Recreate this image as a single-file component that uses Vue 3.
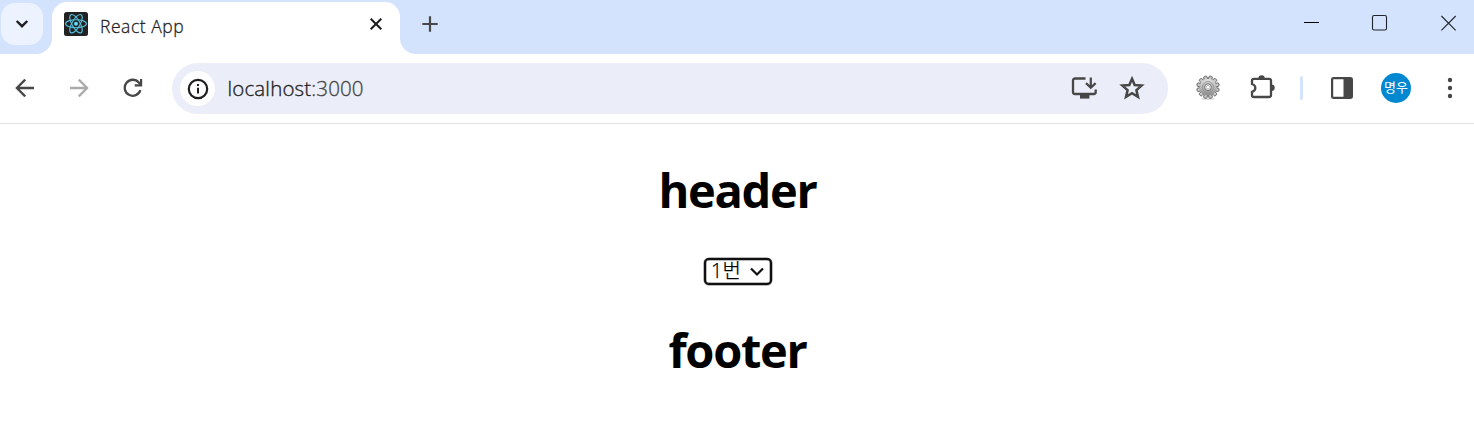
<script setup>
import { ref } from 'vue'

const selected = ref('1번')
const options = ['1번', '2번', '3번']

// Twelve evenly spaced gear teeth
const teeth = Array.from({ length: 12 }, (_, i) => i * 30)
</script>

<template>
  <div class="browser">
    <header class="tabstrip">
      <button class="tab-search" aria-label="Search tabs">
        <svg width="14" height="10" viewBox="0 0 14 10"><path d="M1.7 2 7 7.2 12.3 2" fill="none" stroke="#1f1f1f" stroke-width="2.4" /></svg>
      </button>
      <div class="tab">
        <svg class="favicon" width="24" height="24" viewBox="0 0 24 24">
          <rect width="24" height="24" rx="2.5" fill="#222" />
          <g fill="none" stroke="#53c1de" stroke-width="1.15">
            <ellipse cx="12" cy="11.7" rx="10.4" ry="4" />
            <ellipse cx="12" cy="11.7" rx="10.4" ry="4" transform="rotate(60 12 11.7)" />
            <ellipse cx="12" cy="11.7" rx="10.4" ry="4" transform="rotate(120 12 11.7)" />
          </g>
          <circle cx="12" cy="11.7" r="2" fill="#61dafb" />
        </svg>
        <span class="tab-title">React App</span>
        <svg class="tab-close" width="14" height="14" viewBox="0 0 14 14"><path d="M1.7 1.7 12.3 12.3M12.3 1.7 1.7 12.3" stroke="#1f1f1f" stroke-width="2.1" /></svg>
      </div>
      <svg class="new-tab" width="16" height="16" viewBox="0 0 16 16"><path d="M8 .3V15.7M.3 8H15.7" stroke="#474747" stroke-width="2.2" /></svg>
      <div class="window-controls">
        <svg width="16" height="16" viewBox="0 0 16 16"><path d="M0 7.5H15" stroke="#000" /></svg>
        <svg width="16" height="16" viewBox="0 0 16 16"><rect x=".5" y=".5" width="14" height="14.5" rx="1.6" fill="none" stroke="#20242b" stroke-width="1.1" /></svg>
        <svg width="16" height="16" viewBox="0 0 16 16"><path d="M1.4 1 15.7 15.3M15.7 1 1.4 15.3" stroke="#20242b" stroke-width="1.1" /></svg>
      </div>
    </header>

    <nav class="toolbar">
      <svg class="back" width="20" height="20" viewBox="0 0 20 20"><path d="M10.2 1.6 1.9 10 10.2 18.4M2 10H19" fill="none" stroke="#474747" stroke-width="2.3" /></svg>
      <svg class="forward" width="20" height="20" viewBox="0 0 20 20"><path d="M9.8 1.6 18.1 10 9.8 18.4M18 10H1" fill="none" stroke="#aaa" stroke-width="2.3" /></svg>
      <svg class="reload" width="20" height="20" viewBox="0 0 20 20">
        <path d="M17.4 12.2A8 8 0 1 1 15.8 4.5L18 7" fill="none" stroke="#474747" stroke-width="2.3" />
        <path d="M19.2 1V8.6H11.7V6.3H17V1Z" fill="#474747" />
      </svg>
      <div class="omnibox">
        <span class="site-info">
          <svg width="22" height="22" viewBox="0 0 22 22">
            <circle cx="11" cy="11" r="9.2" fill="none" stroke="#1f1f1f" stroke-width="2.2" />
            <path d="M11 9.7V15.5M11 6V8" stroke="#1f1f1f" stroke-width="2" />
          </svg>
        </span>
        <span class="url">localhost<span class="port">:3000</span></span>
        <svg class="install" width="26" height="24" viewBox="0 0 26 24">
          <path d="M14.5 2.5H4A2 2 0 0 0 2 4.5V16A2 2 0 0 0 4 18H22.7A2 2 0 0 0 24.7 16V13.5" fill="none" stroke="#474747" stroke-width="2.3" />
          <path d="M9 18.5H18.4V22.6H9Z" fill="#474747" />
          <path d="M19.8 1.4V11.2M15 7.1 19.8 11.8 24.6 7.1" fill="none" stroke="#474747" stroke-width="2.2" />
        </svg>
        <svg class="star" width="26" height="26" viewBox="0 0 26 26"><path d="M13 3.8 15.7 10 22.6 10.6 17.4 15.1 19 21.9 13 18.3 7 21.9 8.6 15.1 3.4 10.6 10.3 10Z" fill="none" stroke="#474747" stroke-width="2.5" /></svg>
      </div>
      <svg class="gear" width="24" height="26" viewBox="0 0 24 26">
        <defs>
          <linearGradient id="metal" x1="0" y1="0" x2="0" y2="1"><stop offset="0" stop-color="#e0e0e0" /><stop offset=".5" stop-color="#b8b8b8" /><stop offset="1" stop-color="#8c8c8c" /></linearGradient>
        </defs>
        <ellipse cx="12" cy="24" rx="7" ry="1" fill="#ddd" />
        <rect v-for="a in teeth" :key="a" x="10.3" y=".9" width="3.4" height="5" rx="1.1" fill="#c8c8c8" stroke="#5e5e5e" stroke-width=".9" :transform="`rotate(${a + 15} 12 12.2)`" />
        <circle cx="12" cy="12.2" r="8.5" fill="url(#metal)" />
        <circle cx="12" cy="12.2" r="5.5" fill="none" stroke="#909090" stroke-width=".8" />
        <circle cx="12" cy="12.2" r="3.4" fill="#eee" stroke="#666" stroke-width=".9" />
        <circle cx="12" cy="12.2" r="1.8" fill="#fff" stroke="#999" stroke-width=".6" />
      </svg>
      <svg class="puzzle" width="26" height="26" viewBox="0 0 26 26">
        <path d="M4 4.8H19.2A1.8 1.8 0 0 1 21 6.6V21.2A1.8 1.8 0 0 1 19.2 23H3.8A1.8 1.8 0 0 1 2 21.2V17.8C6.4 16.4 6.4 11.4 2 10V6.6A1.8 1.8 0 0 1 3.8 4.8Z" fill="none" stroke="#474747" stroke-width="2.3" />
        <path d="M8.4 4.5A3.2 3.2 0 0 1 14.8 4.5ZM21.5 10.6A3.2 3.2 0 0 1 21.5 17Z" fill="#474747" />
      </svg>
      <span class="divider"></span>
      <svg class="side-panel" width="22" height="22" viewBox="0 0 22 22">
        <rect x="1.1" y="1.1" width="19.8" height="19.8" rx="1.6" fill="none" stroke="#474747" stroke-width="2.2" />
        <path d="M12.5 1H20.5V21H12.5Z" fill="#474747" />
      </svg>
      <span class="avatar">명우</span>
      <svg class="menu" width="6" height="22" viewBox="0 0 6 22"><g fill="#474747"><circle cx="3" cy="3" r="2.2" /><circle cx="3" cy="11" r="2.2" /><circle cx="3" cy="19" r="2.2" /></g></svg>
    </nav>

    <main class="page">
      <h1>header</h1>
      <div class="picker">
        <select v-model="selected">
          <option v-for="o in options" :key="o">{{ o }}</option>
        </select>
        <svg width="14" height="10" viewBox="0 0 14 10"><path d="M1 1.5 7 7.5 13 1.5" fill="none" stroke="#101010" stroke-width="2.2" /></svg>
      </div>
      <h1 class="foot">footer</h1>
    </main>
  </div>
</template>

<style>
body { margin: 0; background: #fff; overflow: hidden; }
</style>

<style scoped>
.browser { height: 424px; font-family: "Noto Sans", "Noto Sans CJK KR", sans-serif; color: #000; }
svg { display: block; flex: none; }
.tabstrip { display: flex; height: 54px; background: #d3e3fd; }
.tab-search { display: flex; align-items: center; justify-content: center; width: 42px; height: 42px; margin: 3px 0 0 1px; padding: 0; border: 0; border-radius: 14px; background: #ecf2fe; }
.tab { position: relative; display: flex; box-sizing: border-box; width: 348px; height: 52px; margin: 2px 0 0 9px; padding: 0 17px 0 12px; border-radius: 15px 15px 0 0; background: #fff; }
.tab::before, .tab::after { content: ""; position: absolute; bottom: 0; width: 16px; height: 16px; }
.tab::before { right: 100%; background: radial-gradient(circle at 0 0, transparent 15.5px, #fff 16.5px); }
.tab::after { left: 100%; background: radial-gradient(circle at 100% 0, transparent 15.5px, #fff 16.5px); }
.favicon { margin-top: 10px; }
.tab-title { margin: 11px 0 0 12px; font: 300 17.5px/26px "Open Sans", sans-serif; letter-spacing: .55px; color: #1f1f1f; -webkit-text-stroke: .3px #1f1f1f; white-space: nowrap; }
.tab-close { margin: 15px 0 0 auto; }
.new-tab { margin: 16px 0 0 22px; }
.window-controls { display: flex; gap: 52px; margin: 15px 18px 0 auto; }
.window-controls svg { overflow: visible; }
.toolbar { display: flex; align-items: center; box-sizing: border-box; height: 70px; padding-left: 15px; border-bottom: 1px solid #e1e1e4; }
.toolbar > svg { margin-bottom: 1px; }
.forward { margin-left: 34px; }
.reload { margin-left: 34px; }
.omnibox { display: flex; align-items: center; box-sizing: border-box; width: 996px; height: 51px; margin-left: 29px; padding: 0 23px 0 8px; border-radius: 26px; background: #ebeef8; }
.site-info { display: flex; align-items: center; justify-content: center; width: 35px; height: 35px; border-radius: 50%; background: #fff; }
.url { margin: 0 0 2px 12.5px; font: 300 20.5px/28px "Open Sans", sans-serif; letter-spacing: .15px; color: #1f1f1f; -webkit-text-stroke: .35px currentColor; }
.port { color: #474747; }
.install { margin: 0 0 1px auto; }
.star { margin: 0 0 1px 22px; }
.gear { margin-left: 27.5px; }
.toolbar > .puzzle { margin: 0 0 3px 30px; }
.divider { width: 3px; height: 24px; margin: 0 0 1px 24.5px; border-radius: 2px; background: #d3e3fd; }
.side-panel { margin-left: 28px; }
.avatar { width: 30px; height: 30px; margin: 0 0 1px 28px; border-radius: 50%; background: #0288d1; color: #fff; font: 400 13px/28px "Noto Sans CJK KR", sans-serif; text-align: center; white-space: nowrap; }
.menu { margin-left: 36px; }
.page { display: flex; flex-direction: column; align-items: center; padding: 34px 0 0 1px; }
h1 { margin: 0; font: 700 47px/64px "Open Sans", sans-serif; letter-spacing: -1.3px; }
.picker { display: grid; width: 68px; height: 27px; margin-top: 36px; align-items: center; }
.picker > * { grid-area: 1 / 1; }
.picker select { appearance: none; box-sizing: border-box; width: 68px; height: 27px; margin: 0; padding: 0 0 1px 5.5px; border: 2px solid #101010; border-radius: 5px; outline: 0; box-shadow: 0 0 0 .5px #777, inset 0 0 0 .5px #777; background: #fff; color: #000; font: 300 20px/20px "Open Sans", "Noto Sans CJK KR", sans-serif; -webkit-text-stroke: .25px #000; }
.picker svg { justify-self: end; margin-right: 8px; pointer-events: none; }
.foot { margin-top: 33px; }
</style>
